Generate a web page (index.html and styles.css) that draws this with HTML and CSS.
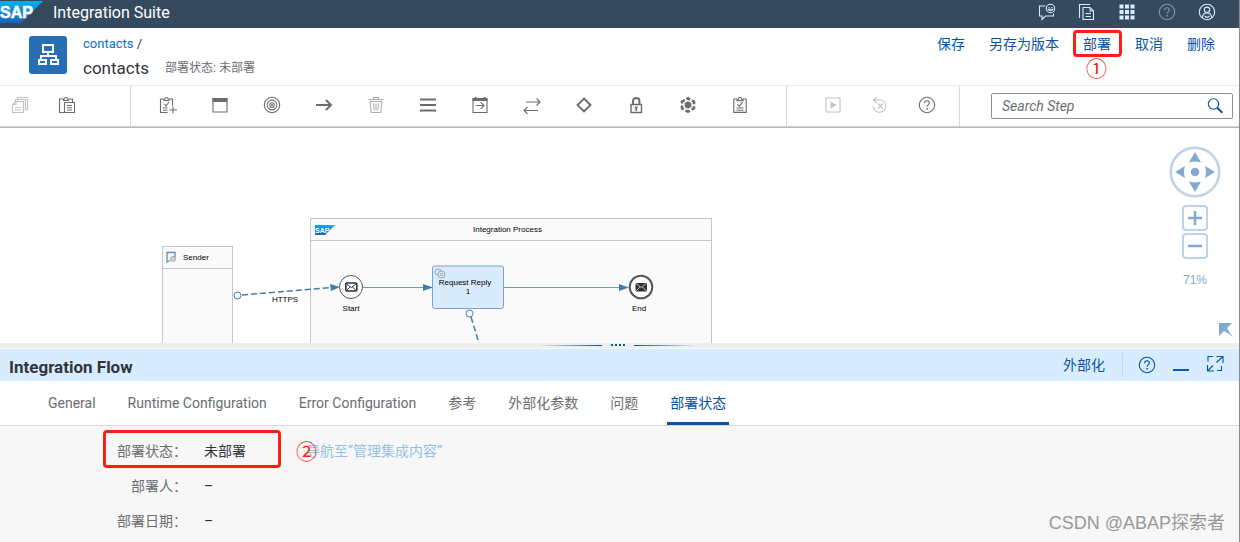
FILE: index.html
```html
<!DOCTYPE html>
<html lang="zh-CN">
<head>
<meta charset="utf-8">
<title>Integration Suite</title>
<link rel="stylesheet" href="styles.css">
</head>
<body>
<svg class="defs" width="0" height="0" aria-hidden="true">
  <defs>
    <linearGradient id="sapBlue" x1="0" y1="0" x2="0" y2="1">
      <stop offset="0" stop-color="#00b0ee"/>
      <stop offset="1" stop-color="#1b63bd"/>
    </linearGradient>
    <symbol id="i-help" viewBox="0 0 18 18">
      <circle cx="9" cy="9" r="7.7"/>
      <path d="M6.6 7.2C6.6 5.5 7.6 4.8 9 4.8s2.4.8 2.4 2.1c0 1.7-2.3 1.9-2.3 3.9"/>
      <path d="M9.1 12v1.5" stroke-width="1.6"/>
    </symbol>
    <symbol id="i-check-list" viewBox="0 0 18 18">
      <path d="M6 3H2.800v13.400h12.400V3H12M6 4.600h6V3.200h-1.400C10.400 1.600 9.800 1.200 9 1.200s-1.400.4-1.600 2H6zM6.300 8.300l1.900 1.900 3.500-4M5.500 12h7M5.500 14.200h7"/>
    </symbol>
  </defs>
</svg>
<div class="app">
  <header class="shell">
    <svg class="shell-logo" width="43" height="28" viewBox="0 0 43 28" role="img" aria-label="SAP">
      <path d="M0 1h43L21 23H0z" fill="url(#sapBlue)"/>
      <text x="0" y="18" class="logo-text">SAP</text>
    </svg>
    <span class="shell-title">Integration Suite</span>
    <nav class="shell-tools" aria-label="Shell">
      <button aria-label="Feedback"><svg viewBox="0 0 18 18"><path d="M7.500 3H1.500v10H4v3.500L7.500 13h8v-2.500"/><circle cx="12.500" cy="5.500" r="4.200"/><path d="M10.300 6.300c.9 2 3.500 2 4.400 0zM11 4v.9M14 4v.9"/></svg></button>
      <button aria-label="Documents"><svg viewBox="0 0 18 18"><path d="M1.500 15V1.500H12M5 4.500h7l3.500 3.500v8.500H5zM12 4.500V8h3.500M7.500 10.500h5.500M7.500 13.500h5.500"/></svg></button>
      <button aria-label="Products"><svg viewBox="0 0 18 18"><path class="solid" d="M1.500 1.500h4v4h-4zM7 1.500h4v4H7zM12.500 1.500h4v4h-4zM1.500 7h4v4h-4zM7 7h4v4H7zM12.500 7h4v4h-4zM1.500 12.500h4v4h-4zM7 12.500h4v4H7zM12.500 12.500h4v4h-4z"/></svg></button>
      <button aria-label="Help" class="dim"><svg><use href="#i-help"/></svg></button>
      <button aria-label="Account"><svg viewBox="0 0 18 18"><circle cx="9" cy="9" r="7.700"/><circle cx="9" cy="6.800" r="2.700"/><path d="M4.300 14.800c.2-3.300 2.200-4.800 4.700-4.800s4.500 1.500 4.700 4.800M6.500 13l2.500 1.500 2.500-1.500"/></svg></button>
    </nav>
  </header>

  <section class="object">
    <svg class="object-icon" viewBox="0 0 38 38" aria-hidden="true">
      <path d="M14 9h10v7H14zM19 16v4M12 24v-4h15v4M10 24h7v4h-7zM22 24h7v4h-7z"/>
    </svg>
    <div class="object-text">
      <div class="crumb"><a href="#">contacts</a> /</div>
      <div class="object-line"><h1>contacts</h1><span class="state">部署状态: 未部署</span></div>
    </div>
    <div class="object-actions">
      <button>保存</button>
      <button>另存为版本</button>
      <span class="marked"><button>部署</button><span class="mark-num">①</span></span>
      <button>取消</button>
      <button>删除</button>
    </div>
  </section>

  <div class="toolbar" role="toolbar">
    <div class="tools tools-clip">
      <button aria-label="Copy" disabled><svg viewBox="0 0 18 18"><path d="M6.500 3.500V1.500h10v12h-2M4.500 6V3.500h10v11M1.500 8.500L5 5.500h7.500v11h-11zM1.500 8.500H5v-3M4 11.500h6M4 14h6"/></svg></button>
      <button aria-label="Paste"><svg viewBox="0 0 18 18"><path d="M6.500 16.500h-5V3h4m5 0h4v3.500M5.500 4.500h5V3H9.500c0-2-3-2-3 0h-1zM6.500 6.500h10v10h-10zM9 9.500h5M9 11.700h5M9 14h5"/></svg></button>
    </div>
    <div class="tools tools-steps">
      <button aria-label="Add participant"><svg viewBox="0 0 18 18"><path d="M8.500 16.500H1.500V3H5M10 3h3.500v7M5 4.500h5V3H9c0-2-3-2-3 0H5zM5.500 8l1.500 2 3-4M4 12h4.500M4 14.200h4.500M14 10.500v7M10.500 14H18"/></svg></button>
      <button aria-label="Process"><svg viewBox="0 0 18 18"><path d="M2 2.500h14v13.500H2z"/><path class="solid" d="M1.500 2h15v4h-15z"/></svg></button>
      <button aria-label="Events"><svg viewBox="0 0 18 18"><circle cx="9" cy="9" r="7.700"/><circle cx="9" cy="9" r="4.900"/><circle cx="9" cy="9" r="2.300"/><circle cx="9" cy="9" r=".5"/></svg></button>
      <button aria-label="Connector"><svg viewBox="0 0 18 18"><path d="M1 9h15M11 4l5 5-5 5" stroke-width="1.900"/></svg></button>
      <button aria-label="Delete" class="faded"><svg viewBox="0 0 18 18"><path d="M1.500 3.500h15M6.500 3.500v-2h5v2M3 5.500h12l-1.300 11H4.300zM6.500 7.500l.6 7M9 7.500v7M11.500 7.500l-.6 7"/></svg></button>
      <button aria-label="Menu"><svg viewBox="0 0 18 18"><path d="M1 3.500h16M1 9h16M1 14.500h16" stroke-width="1.900"/></svg></button>
      <button aria-label="Calls"><svg viewBox="0 0 18 18"><path d="M2 3h14v13.500H2zM4.500 9.500h8.500M9.700 6.200L13 9.500l-3.300 3.300"/><path class="solid" d="M1.500 2h2V1h2v1h7V1h2v1h2v3h-15z"/></svg></button>
      <button aria-label="Transformation"><svg viewBox="0 0 18 18"><path d="M3 6h14M13.500 2.500L17 6l-3.500 3.500M15 14.500H1M4.500 11L1 14.500 4.500 18"/></svg></button>
      <button aria-label="Routing"><svg viewBox="0 0 18 18"><path d="M9 2.500L15.500 9 9 15.500 2.500 9z" stroke-width="1.900"/></svg></button>
      <button aria-label="Security"><svg viewBox="0 0 18 18"><path d="M4 8.500h10.500v8H4z" stroke-width="1.400"/><path d="M6 9V5c0-4 6.500-4 6.500 0v4" stroke-width="1.900"/><path class="solid" d="M8 10.500h2.500v2H10V15H8.500v-2.500H8z"/></svg></button>
      <button aria-label="Persistence"><svg viewBox="0 0 18 18"><path class="solid" d="M9 5.300l3.300 1.800v3.800L9 12.700l-3.300-1.800V7.100z"/><path d="M9 2.300l6 3.400v6.600l-6 3.400-6-3.400V5.700z" stroke-width="2.600" stroke-dasharray="4.900 2" stroke-dashoffset="2.450"/></svg></button>
      <button aria-label="Validator"><svg><use href="#i-check-list"/></svg></button>
    </div>
    <div class="tools tools-run">
      <button aria-label="Simulate" disabled><svg viewBox="0 0 18 18"><path d="M2 2h14v14H2z"/><path class="solid" d="M6.500 5.500L12.500 9l-6 3.500z"/></svg></button>
      <button aria-label="Reset" disabled><svg viewBox="0 0 18 18"><path d="M3 4h7.500a6.300 6.300 0 1 1-8.300 6.300M5.500 1L2.500 4l3 3M7 7.500l5 5M12 7.500l-5 5"/></svg></button>
      <button aria-label="Help"><svg><use href="#i-help"/></svg></button>
    </div>
    <form class="search" onsubmit="return false">
      <input type="text" placeholder="Search Step" aria-label="Search Step">
      <button aria-label="Search"><svg viewBox="0 0 18 18"><circle cx="7.500" cy="7" r="5.200"/><path d="M11.300 10.800l5 5" stroke-width="2"/></svg></button>
    </form>
  </div>

  <main class="canvas">
    <svg class="diagram" width="100%" height="100%" aria-label="Integration flow diagram">
      <g class="pool">
        <rect x="162.500" y="119.500" width="70" height="140"/>
        <path d="M162.500 141.500h70"/>
        <rect x="310.500" y="91.500" width="401" height="170"/>
        <path d="M310.500 113.500h401"/>
      </g>
      <path d="M170 133.500l-3 1.500v-9.500h8v5" fill="none" stroke="#5f8fc0" stroke-width="1.300"/>
      <circle cx="173" cy="132" r="2.300" fill="#dfe3c0" stroke="#8a9890"/>
      <path d="M315 98h20l-10 10h-10z" fill="url(#sapBlue)"/>
      <text x="315" y="106" class="mini-logo">SAP</text>
      <text x="183" y="133">Sender</text>
      <text x="473" y="105">Integration Process</text>
      <g class="wire">
        <path d="M242 168L331 160.500" stroke-dasharray="6 3"/>
        <path d="M363 160.500h61M504 160.500h115" class="thin"/>
        <path d="M471 190l8 26" stroke-dasharray="6 3"/>
        <circle cx="237.500" cy="168.500" r="3.500"/>
      </g>
      <path d="M330 157l10 3-9 4zM423 157l10 3.500-10 3.500zM619 157l10 3.500-10 3.500z" fill="#427cac"/>
      <rect class="task" x="432.500" y="139" width="71" height="42.500" rx="2"/>
      <g class="wire"><circle cx="469.500" cy="186.500" r="3.500"/></g>
      <g fill="none" stroke="#9aa5ad"><circle cx="438" cy="145" r="3"/><circle cx="441.500" cy="147.500" r="3.500" fill="#d8ecfe"/><circle cx="441.500" cy="147.500" r="1.300"/></g>
      <circle cx="351" cy="160" r="11.500" fill="#fff" stroke="#555"/>
      <g fill="none" stroke="#333"><rect x="345.800" y="156" width="11" height="8" rx="1" stroke-width="1.600"/><path d="M346 156.500l5.300 4 5.300-4M346 164l4-4M356.500 164l-4-4"/></g>
      <circle cx="641" cy="160" r="11.300" fill="#fff" stroke="#555" stroke-width="2"/>
      <rect x="635.500" y="156" width="11.500" height="8.500" rx="1" fill="#333"/>
      <path d="M636 156.500l5.200 4 5.200-4M636 164l4-4M646.500 164l-4-4" fill="none" stroke="#ddd" stroke-width=".8"/>
      <g text-anchor="middle">
        <text x="285" y="175">HTTPS</text>
        <text x="351" y="184">Start</text>
        <text x="639" y="184">End</text>
        <text x="465" y="158">Request Reply</text>
        <text x="468" y="167">1</text>
      </g>
    </svg>
    <div class="view-controls">
      <svg class="pan" viewBox="0 0 52 52" role="img" aria-label="Pan">
        <circle cx="26" cy="26" r="24.200" fill="#fff" stroke="#bfd2e7" stroke-width="2.600"/>
        <path d="M26 6l6 10.500q-6-2-12 0zM26 46l6-10.500q-6 2-12 0zM6 26l10-6q-2 6 0 12zM46 26l-10-6q2 6 0 12z"/>
        <circle cx="26" cy="26" r="4.300"/>
      </svg>
      <button aria-label="Zoom in"><svg viewBox="0 0 22 22"><path d="M11 4v14M4 11h14"/></svg></button>
      <button aria-label="Zoom out"><svg viewBox="0 0 22 22"><path d="M4 11h14"/></svg></button>
      <span class="zoom-level">71%</span>
    </div>
    <svg class="corner" width="14" height="14" viewBox="0 0 14 14" aria-hidden="true"><path d="M0 0h13L8 5q2 4 6 9-5-4-9-6L0 13z"/></svg>
  </main>

  <div class="splitter"><i class="fade-left"></i><span class="dots"><i></i><i></i><i></i><i></i></span><i class="fade-right"></i></div>

  <section class="panel">
    <div class="panel-head">
      <h2>Integration Flow</h2>
      <button class="externalize">外部化</button>
      <div class="panel-tools">
        <button aria-label="Help"><svg><use href="#i-help"/></svg></button>
        <button aria-label="Minimize"><svg viewBox="0 0 18 18"><path d="M1 14h16" stroke-width="1.900"/></svg></button>
        <button aria-label="Full screen"><svg viewBox="0 0 18 18"><path d="M7 .5H2v5M11 14.500h4.500V10M10.500 .5H17V7M17 .5L10.500 6.500M1.500 9v6H8M1.500 15L7 9.500"/></svg></button>
      </div>
    </div>
    <nav class="tabs">
      <a href="#">General</a>
      <a href="#">Runtime Configuration</a>
      <a href="#">Error Configuration</a>
      <a href="#">参考</a>
      <a href="#">外部化参数</a>
      <a href="#">问题</a>
      <a href="#" class="current" aria-current="page">部署状态</a>
    </nav>
    <div class="details">
      <dl>
        <div class="row"><dt>部署状态：</dt><dd class="value">未部署</dd><dd class="link-cell"><a href="#">导航至“管理集成内容”</a><span class="mark-num">②</span></dd><dd class="mark-box" aria-hidden="true"></dd></div>
        <div class="row"><dt>部署人：</dt><dd class="value">–</dd></div>
        <div class="row"><dt>部署日期：</dt><dd class="value">–</dd></div>
      </dl>
      <span class="watermark">CSDN @ABAP探索者</span>
    </div>
  </section>
</div>
</body>
</html>
```
FILE: styles.css
```css
* {
  box-sizing: border-box;
}

body {
  margin: 0;
  font-family: Roboto, "Noto Sans CJK SC", sans-serif;
  font-size: 14px;
  line-height: 20px;
  color: #32363a;
}

h1,
h2,
dl,
dd {
  margin: 0;
}

a {
  text-decoration: none;
}

button {
  flex: none;
  padding: 0;
  border: 0;
  background: none;
  color: inherit;
  font: inherit;
}

button svg {
  display: block;
  width: 18px;
  height: 18px;
  fill: none;
  stroke: currentColor;
  stroke-width: 1.1;
}

.solid {
  fill: currentColor;
  stroke: none;
}

.defs {
  position: absolute;
}

.app {
  display: flex;
  flex-direction: column;
  min-height: 100vh;
  border-right: 1px solid #8b8b8b;
}

/* Shell bar */
.shell {
  display: flex;
  align-items: center;
  height: 28px;
  background: #354a5f;
  color: #fff;
}

.logo-text {
  font: bold 16px "Liberation Sans", sans-serif;
  fill: #fff;
  stroke: #fff;
  stroke-width: 0.6px;
}

.shell-title {
  margin-left: 10px;
  padding-bottom: 2px;
  font-size: 16px;
}

.shell-tools {
  display: flex;
  gap: 22px;
  margin-left: auto;
  padding: 0 23px 4px 0;
  color: #d7ebff;
}

.shell-tools .dim {
  color: #8494a6;
}

/* Object header */
.object {
  display: flex;
  height: 57px;
  padding: 6px 24px 0 29px;
}

.object-icon {
  width: 38px;
  height: 38px;
  margin: 2px 16px 0 0;
  border-radius: 3px;
  background: #286eb4;
  fill: none;
  stroke: #fff;
  stroke-width: 2;
}

.crumb {
  font-size: 13px;
}

.crumb a {
  color: #0a6ed1;
}

.object-line {
  display: flex;
  align-items: center;
  gap: 16px;
  margin-top: 2px;
}

h1 {
  font-size: 17px;
  font-weight: 400;
  line-height: 24px;
}

.state {
  font-size: 12px;
  color: #6a6d70;
}

.object-actions {
  display: flex;
  align-items: flex-start;
  gap: 24px;
  margin-left: auto;
  color: #0854a0;
}

.marked {
  position: relative;
}

.marked::before {
  content: "";
  position: absolute;
  inset: -4px -11px -3px -10px;
  border: 3px solid #fb2012;
  border-radius: 4px;
  pointer-events: none;
}

.mark-num {
  position: absolute;
  font-family: "Noto Sans CJK SC", sans-serif;
  font-size: 21px;
  color: #fb2012;
}

.marked .mark-num {
  top: 23px;
  left: 3px;
}

/* Step toolbar */
.toolbar {
  position: relative;
  z-index: 1;
  display: flex;
  height: 42px;
  border-top: 1px solid #ededed;
  border-bottom: 1px solid #d0d0d0;
  box-shadow: 0 1px 0 #b8b8b8;
  color: #6a6d70;
}

.tools {
  display: flex;
  align-items: center;
  padding-bottom: 2px;
  border-right: 1px solid #d9d9d9;
}

.tools button:disabled {
  color: #c0c2c4;
}

.tools .faded {
  color: #b0b2b4;
}

.tools-clip {
  gap: 29px;
  padding-right: 54px;
  padding-left: 11px;
}

.tools-steps {
  flex: 1;
  gap: 34px;
  padding-left: 28px;
}

.tools-run {
  gap: 29px;
  padding-right: 23px;
  padding-left: 37px;
}

.search {
  display: flex;
  align-items: center;
  width: 242px;
  height: 26px;
  margin: 7px 6px 0 31px;
  padding: 0 8px 0 10px;
  border: 1px solid #89919a;
  border-radius: 2px;
  color: #0854a0;
}

.search input {
  flex: 1;
  min-width: 0;
  padding: 0;
  border: 0;
  outline: 0;
  background: none;
  font: inherit;
}

.search input::placeholder {
  font-style: italic;
  color: #6a6d70;
}

/* Flow canvas */
.canvas {
  position: relative;
  display: flex;
  justify-content: flex-end;
  height: 216px;
  overflow: hidden;
}

.diagram {
  position: absolute;
  inset: 0;
}

.diagram text {
  font: 8px "Liberation Sans", sans-serif;
  fill: #000;
}

.diagram .mini-logo {
  font-size: 7px;
  font-weight: bold;
  fill: #fff;
}

.pool {
  fill: #fafafa;
  stroke: #c6c6c6;
}

.wire {
  fill: #fff;
  stroke: #427cac;
  stroke-width: 1.5;
}

.wire circle {
  stroke-width: 1;
}

.wire .thin {
  stroke: #6d9dc4;
  stroke-width: 1.2;
}

.task {
  fill: #d8ecfe;
  stroke: #76a3c9;
}

.view-controls {
  position: relative;
  display: flex;
  flex-direction: column;
  align-items: center;
  gap: 2px;
  margin: 19px 18px 0 0;
  color: #84a9d1;
}

.pan {
  width: 52px;
  height: 52px;
  margin-bottom: 5px;
  fill: #84a9d1;
}

.view-controls button {
  width: 26px;
  height: 26px;
  border: 2px solid #bfd2e7;
  border-radius: 4px;
  background: #fff;
}

.view-controls button svg {
  width: 22px;
  height: 22px;
  stroke-width: 2.5;
}

.zoom-level {
  margin-top: 9px;
  font-family: "Liberation Sans", sans-serif;
  font-size: 12px;
}

.corner {
  position: absolute;
  right: 6px;
  bottom: 6px;
  fill: #84a9d1;
}

/* Splitter */
.splitter {
  display: flex;
  justify-content: center;
  align-items: flex-start;
  gap: 9px;
  height: 6px;
  padding: 1px 4px 0 0;
  border-bottom: 1px solid #f7f7f7;
  background: #eee;
}

.fade-left,
.fade-right {
  width: 64px;
  height: 1px;
  margin-top: 1px;
  background: linear-gradient(to left, #0854a0, transparent);
}

.fade-right {
  background: linear-gradient(to right, #0854a0, transparent);
}

.dots {
  display: flex;
  gap: 2px;
}

.dots i {
  width: 2px;
  height: 2px;
  background: #0854a0;
}

/* Property panel */
.panel {
  display: flex;
  flex: 1;
  flex-direction: column;
}

.panel-head {
  display: flex;
  align-items: center;
  height: 32px;
  padding: 0 15px 0 9px;
  background: #d8ecff;
  color: #0854a0;
}

h2 {
  flex: 1;
  padding-top: 3px;
  font-size: 17px;
  font-weight: 700;
  color: #32363a;
}

.panel-tools {
  display: flex;
  align-items: center;
  gap: 16px;
  height: 24px;
  margin-left: 17px;
  padding-left: 15px;
  border-left: 1px solid #c3d7ea;
}

.tabs {
  display: flex;
  gap: 26px;
  height: 45px;
  padding: 0 45px;
  border-bottom: 1px solid #d4d6d7;
}

.tabs a {
  padding: 12px 3px 0;
  border-bottom: 3px solid transparent;
  color: #6a6d70;
  white-space: nowrap;
}

.tabs .current {
  border-color: #0854a0;
  color: #0854a0;
}

.details {
  display: flex;
  flex: 1;
  justify-content: space-between;
  background: #f7f7f7;
}

dl {
  padding-top: 7px;
}

.row {
  position: relative;
  display: grid;
  grid-template-columns: 187px 85px auto;
  column-gap: 17px;
  align-items: center;
  height: 35px;
}

dt {
  text-align: right;
  color: #6a6d70;
}

.link-cell {
  position: relative;
}

.link-cell a {
  color: #96bfe8;
}

.link-cell .mark-num {
  top: -1px;
  left: -10px;
}

.mark-box {
  position: absolute;
  top: -3px;
  left: 103px;
  width: 178px;
  height: 38px;
  border: 3px solid #fb2012;
  border-radius: 4px;
}

.watermark {
  align-self: flex-end;
  padding: 0 14px 9px 0;
  font-family: "Liberation Sans", "Noto Sans CJK SC", sans-serif;
  font-size: 18px;
  color: #999;
}
```
